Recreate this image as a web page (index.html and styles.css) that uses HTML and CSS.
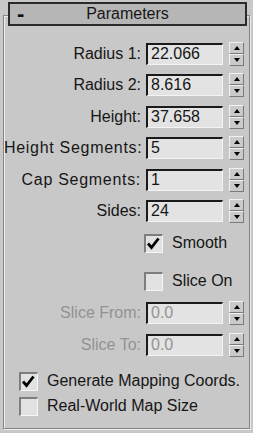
FILE: index.html
```html
<!DOCTYPE html>
<html>
<head>
<meta charset="utf-8">
<link rel="stylesheet" href="styles.css">
</head>
<body>
<div class="rollout">
  <div class="rollout-head"><span class="minus">-</span><span class="title">Parameters</span></div>
  <div class="group">
    <div class="spin-rows">
      <div class="row"><span class="label">Radius 1:</span><span class="field">22.066</span><span class="spinner"><span class="sp-btn up"></span><span class="sp-btn down"></span></span></div>
      <div class="row"><span class="label">Radius 2:</span><span class="field">8.616</span><span class="spinner"><span class="sp-btn up"></span><span class="sp-btn down"></span></span></div>
      <div class="row"><span class="label">Height:</span><span class="field">37.658</span><span class="spinner"><span class="sp-btn up"></span><span class="sp-btn down"></span></span></div>
      <div class="row"><span class="label label-wide">Height Segments:</span><span class="field">5</span><span class="spinner"><span class="sp-btn up"></span><span class="sp-btn down"></span></span></div>
      <div class="row"><span class="label label-wide">Cap Segments:</span><span class="field">1</span><span class="spinner"><span class="sp-btn up"></span><span class="sp-btn down"></span></span></div>
      <div class="row"><span class="label">Sides:</span><span class="field">24</span><span class="spinner"><span class="sp-btn up"></span><span class="sp-btn down"></span></span></div>
    </div>
    <div class="check right smooth"><span class="box"><svg viewBox="0 0 19 19" width="19" height="19"><path d="M4 9.5 L7.5 13.5 L14.5 4.5" fill="none" stroke="#000" stroke-width="2.8"/></svg></span><span class="check-text">Smooth</span></div>
    <div class="check right slice-on"><span class="box"></span><span class="check-text">Slice On</span></div>
    <div class="spin-rows disabled slice-rows">
      <div class="row"><span class="label">Slice From:</span><span class="field">0.0</span><span class="spinner"><span class="sp-btn up"></span><span class="sp-btn down"></span></span></div>
      <div class="row"><span class="label">Slice To:</span><span class="field">0.0</span><span class="spinner"><span class="sp-btn up"></span><span class="sp-btn down"></span></span></div>
    </div>
    <div class="check left gen"><span class="box"><svg viewBox="0 0 19 19" width="19" height="19"><path d="M4 9.5 L7.5 13.5 L14.5 4.5" fill="none" stroke="#000" stroke-width="2.8"/></svg></span><span class="check-text">Generate Mapping Coords.</span></div>
    <div class="check left real"><span class="box"></span><span class="check-text">Real-World Map Size</span></div>
  </div>
</div>
</body>
</html>
```

FILE: styles.css
```css
html, body {
  margin: 0;
  padding: 0;
}
body {
  width: 253px;
  height: 433px;
  background: #c8c8c8;
  font-family: "Liberation Sans", Arial, sans-serif;
  font-size: 16px;
  color: #161616;
  overflow: hidden;
}
.rollout {
  padding-top: 2px;
}
.rollout-head {
  position: relative;
  z-index: 1;
  margin: 0 6px 0 8px;
  height: 24px;
  box-sizing: border-box;
  border: 2px solid #2a2a2a;
  background: #b6b6b6;
  display: flex;
  align-items: center;
  justify-content: center;
}
.minus {
  position: absolute;
  left: 7px;
  top: 0;
  font-size: 22px;
  line-height: 20px;
  font-weight: bold;
  color: #111;
}
.title {
  line-height: 20px;
}
.group {
  margin: -11px 3px 0 3px;
  height: 414px;
  box-sizing: border-box;
  border: 1px solid #858585;
  box-shadow: inset 1px 1px 0 #ececec, 1px 1px 0 #ececec;
  padding-top: 27px;
}
.spin-rows {
  display: flex;
  flex-direction: column;
  gap: 9.4px;
}
.row {
  display: flex;
  align-items: center;
  height: 22px;
}
.label {
  width: 137px;
  text-align: right;
  white-space: nowrap;
  margin-right: 5px;
}
.label-wide {
  letter-spacing: 0.7px;
}
.field {
  width: 77px;
  height: 22px;
  box-sizing: border-box;
  background: #e3e3e3;
  border-style: solid;
  border-width: 2px 1px 1px 2px;
  border-color: #1a1a1a #f4f4f4 #f4f4f4 #1a1a1a;
  padding-left: 3px;
  line-height: 18px;
  margin-right: 6px;
}
.spinner {
  width: 15px;
  height: 24px;
  display: flex;
  flex-direction: column;
}
.sp-btn {
  flex: 1;
  box-sizing: border-box;
  border-style: solid;
  border-width: 1px;
  border-color: #f2f2f2 #7a7a7a #7a7a7a #f2f2f2;
  background: #cacaca;
  display: flex;
  align-items: center;
  justify-content: center;
}
.sp-btn::after {
  content: "";
  width: 0;
  height: 0;
  border-left: 3.5px solid transparent;
  border-right: 3.5px solid transparent;
}
.up::after {
  border-bottom: 4px solid #000;
}
.down::after {
  border-top: 4px solid #000;
}
.disabled .label,
.disabled .field {
  color: #939393;
}
.check {
  display: flex;
  align-items: center;
  height: 19px;
}
.box {
  width: 19px;
  height: 19px;
  box-sizing: border-box;
  background: #e2e2e2;
  border-style: solid;
  border-width: 2px 1px 1px 2px;
  border-color: #7e7e7e #f6f6f6 #f6f6f6 #7e7e7e;
  position: relative;
  flex: none;
}
.box svg {
  position: absolute;
  left: -2px;
  top: -2px;
}
.check.right {
  padding-left: 140px;
}
.check-text {
  margin-left: 9px;
  white-space: nowrap;
}
.check.left {
  padding-left: 15px;
}
.smooth {
  margin-top: 12px;
}
.slice-on {
  margin-top: 19px;
}
.slice-rows {
  margin-top: 11px;
  gap: 10px;
}
.gen {
  margin-top: 16px;
}
.real {
  margin-top: 6px;
}
```
